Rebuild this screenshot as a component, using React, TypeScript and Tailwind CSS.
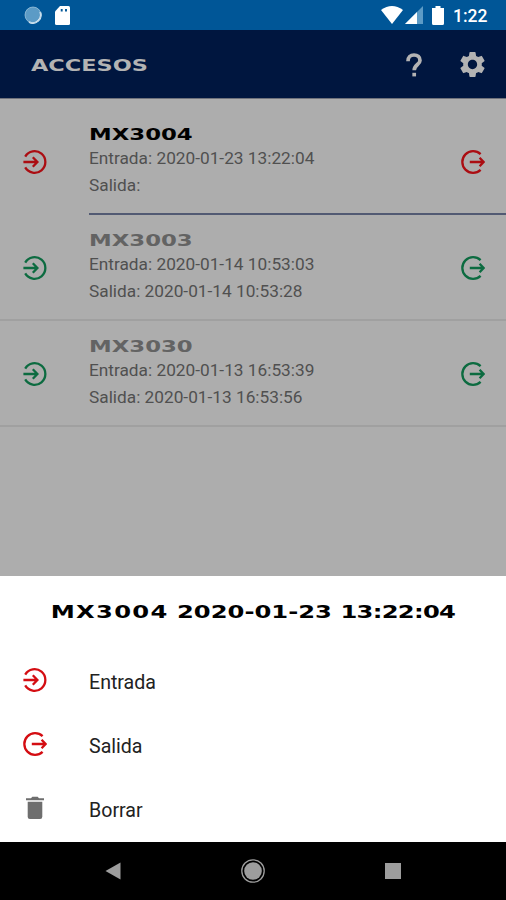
import { ReactNode } from 'react';
import clsx from 'clsx';
import { MdSettings } from 'react-icons/md';

interface Access {
  id: string;
  entrada: string;
  salida: string;
  open: boolean;
}

const accesses: Access[] = [
  { id: 'MX3004', entrada: '2020-01-23 13:22:04', salida: '', open: true },
  { id: 'MX3003', entrada: '2020-01-14 10:53:03', salida: '2020-01-14 10:53:28', open: false },
  { id: 'MX3030', entrada: '2020-01-13 16:53:39', salida: '2020-01-13 16:53:56', open: false },
];

function EnterIcon({ className }: { className?: string }) {
  return (
    <svg viewBox="0 0 24 24" className={clsx('w-6 h-6 shrink-0', className)} fill="none" stroke="currentColor" strokeWidth="2.3">
      <path d="M2.2 6.6A10.8 10.8 0 1 1 2.2 17.4" />
      <path d="M0.4 12H14.5M9.8 7.3 14.4 12 9.8 16.7" />
    </svg>
  );
}

function ExitIcon({ className }: { className?: string }) {
  return (
    <svg viewBox="0 0 24 24" className={clsx('w-6 h-6 shrink-0', className)} fill="none" stroke="currentColor" strokeWidth="2.3">
      <path d="M19.6 4.2A10.8 10.8 0 1 0 19.6 19.8" />
      <path d="M8.8 12H22.5M18.6 7.8 22.6 12 18.6 16.2" />
    </svg>
  );
}

function HelpIcon({ className }: { className?: string }) {
  return (
    <svg viewBox="0 0 16 24" className={className} fill="none" stroke="currentColor" strokeWidth="3.7">
      <path d="M2 8.2C2 4.3 4.5 2 8 2C11.6 2 14 4.1 14 7.4C14 11.4 8.2 11.8 8.2 17.2" />
      <path d="M8.2 19.8V23.4" />
    </svg>
  );
}

function TrashIcon({ className }: { className?: string }) {
  return (
    <svg viewBox="0 0 24 24" className={clsx('w-6 h-6 shrink-0', className)} fill="currentColor">
      <path d="M3 2.2H8L9.3 0.8H14.7L16 2.2H21V4.3H3z" />
      <path d="M4.7 5.8H19.3V20.8Q19.3 23 17.1 23H6.9Q4.7 23 4.7 20.8z" />
    </svg>
  );
}

// Extended display lettering used for titles and unit ids
function Wide({ children, className }: { children: ReactNode; className?: string }) {
  return (
    <span
      className={clsx(
        "block whitespace-nowrap font-['DejaVu_Sans',sans-serif] font-bold leading-none",
        className
      )}
    >
      {children}
    </span>
  );
}

function StatusBar() {
  return (
    <div className="flex h-[30px] items-center bg-[#005697] pl-6 pr-[18px] text-white">
      <svg viewBox="0 0 18 18" className="h-[18px] w-[18px]">
        <circle cx="9" cy="9" r="8" fill="#5c9bc6" />
        <path d="M16.2 6A8 8 0 0 1 5 16" fill="none" stroke="#e4eef5" strokeWidth="1.8" />
        <circle cx="9" cy="9" r="8" fill="none" stroke="#a9cbe1" strokeWidth="0.7" />
      </svg>
      <svg viewBox="0 0 15 19" className="ml-[13px] h-[19px] w-[15px]">
        <path d="M5 0h8.5Q15 0 15 1.5v16q0 1.5-1.5 1.5h-12Q0 19 0 17.5V5.5z" fill="white" />
        <path d="M6.7 3v2.6M11 3v2.6" stroke="#005697" strokeWidth="1.9" />
      </svg>
      <svg viewBox="0 0 22 18" className="ml-auto h-[18px] w-[22px]">
        <path d="M0 4Q11-4 22 4L11 18z" fill="white" />
      </svg>
      <svg viewBox="0 0 18 18" className="ml-[2px] h-[18px] w-[18px]">
        <path d="M18 0V18H0z" fill="#5c9bc6" />
        <path d="M12 6V18H0z" fill="white" />
      </svg>
      <svg viewBox="0 0 12 19" className="ml-[9px] h-[19px] w-[12px]">
        <path d="M3.5 0h5v2H12v15.5q0 1.5-1.5 1.5h-9Q0 19 0 17.5V2h3.5z" fill="white" />
      </svg>
      <span className="ml-[9px] mt-[3px] w-[35px] whitespace-nowrap text-[17.5px] font-medium leading-none">1:22</span>
    </div>
  );
}

function AccessRow({ access }: { access: Access }) {
  const tint = access.open ? 'text-[#ab0d12]' : 'text-[#0c6b40]';
  return (
    <div className={clsx('flex h-[106px] items-stretch pl-[23px]', !access.open && 'border-b-2 border-[#a0a0a0]')}>
      <EnterIcon className={clsx('mt-[40.5px]', tint)} />
      <div
        className={clsx(
          'ml-[42px] flex flex-1 justify-between pr-[21.5px]',
          access.open && 'border-b-2 border-[#525a73]'
        )}
      >
        <div className="pt-[19px]">
          <Wide className={clsx('h-4 origin-left scale-x-[1.52] text-[15px]', access.open ? 'text-black' : 'text-[#636363]')}>
            {access.id}
          </Wide>
          <div className="pt-px text-[17.25px] leading-[27px] text-[#505050]">
            <p>Entrada: {access.entrada}</p>
            <p>Salida: {access.salida}</p>
          </div>
        </div>
        <ExitIcon className={clsx('mt-[40.5px]', tint)} />
      </div>
    </div>
  );
}

function SheetItem({ icon, label }: { icon: ReactNode; label: string }) {
  return (
    <button className="flex h-16 w-full items-center pl-[23px] text-left">
      {icon}
      <span className="ml-[42px] pt-[3px] text-[19.6px] text-[#222222]">{label}</span>
    </button>
  );
}

export default function App() {
  return (
    <div className="flex h-[900px] w-[506px] flex-col overflow-hidden bg-[#adadad] font-[Roboto,sans-serif]">
      <StatusBar />
      <header className="flex h-[69px] items-center border-b border-[#6f727c] bg-[#00163f] pl-[31px] pr-[18px] text-[#b3b3b3]">
        <Wide className="mt-[3px] origin-left scale-x-[1.4] text-[16px]">ACCESOS</Wide>
        <HelpIcon className="ml-auto mt-[2px] h-6 w-4" />
        <MdSettings className="ml-[35px] h-[31px] w-[31px]" />
      </header>

      <main className="flex-1 pt-[10px]">
        {accesses.map((access) => (
          <AccessRow key={access.id} access={access} />
        ))}
      </main>

      <section className="h-[266px] bg-white">
        <div className="flex h-[73px] items-center justify-center">
          <Wide className="scale-x-[1.425] text-[17px] text-black">
            <span className="tracking-[0.9px]">MX3004</span> 2020-01-23{' '}
            <span className="tracking-[-0.5px]">13:22:04</span>
          </Wide>
        </div>
        <SheetItem icon={<EnterIcon className="mb-[3px] text-[#d40d12]" />} label="Entrada" />
        <SheetItem icon={<ExitIcon className="mb-[3px] text-[#d40d12]" />} label="Salida" />
        <SheetItem icon={<TrashIcon className="mb-[3px] text-[#6e6e6e]" />} label="Borrar" />
      </section>

      <nav className="flex h-[58px] items-center justify-between bg-black px-[105px]">
        <svg viewBox="0 0 16 18" className="h-[18px] w-4">
          <path d="M15.5 0.5V17.5L0.5 9z" fill="#9d9d9d" />
        </svg>
        <svg viewBox="0 0 24 24" className="h-6 w-6">
          <circle cx="12" cy="12" r="11.2" fill="none" stroke="#9d9d9d" strokeWidth="1.3" />
          <circle cx="12" cy="12" r="8.8" fill="#9d9d9d" />
        </svg>
        <div className="h-4 w-4 bg-[#9d9d9d]" />
      </nav>
    </div>
  );
}
